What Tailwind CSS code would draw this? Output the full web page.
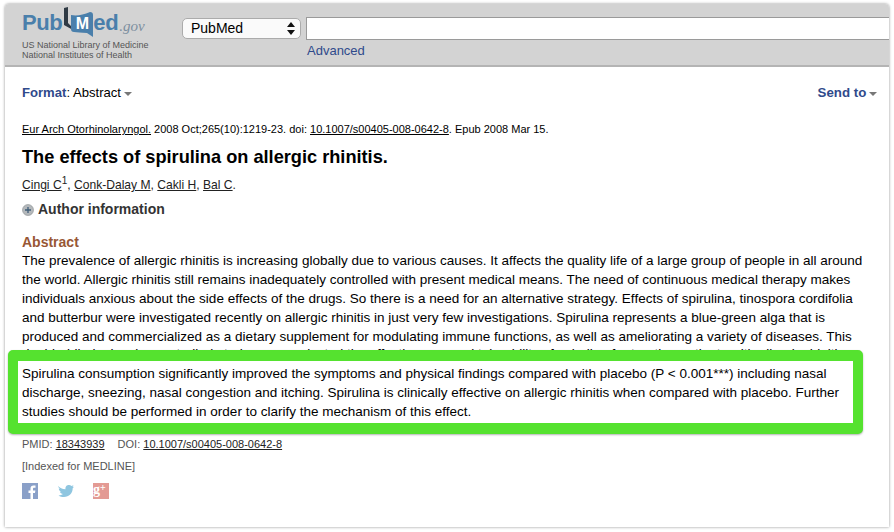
<!DOCTYPE html>
<html lang="en">
<head>
  <meta charset="UTF-8" />
  <title>The effects of spirulina on allergic rhinitis - PubMed</title>
  <script src="https://cdn.jsdelivr.net/npm/@tailwindcss/browser@4"></script>
</head>
<body class="bg-white font-['Liberation_Sans',Arial,sans-serif] text-black overflow-hidden">
  <div class="w-[894px] h-[532px] pt-[4px] pl-[5px] bg-white">
    <div class="w-[884px] h-[523px] rounded-t-[4px] shadow-[0_0_3px_rgba(0,0,0,0.45)] bg-white relative">

      <!-- header -->
      <header class="h-[63px] bg-[#d3d3d3] rounded-t-[4px] border-b-2 border-[#b4b4b4] flex">
        <div class="w-[177px] pl-[17px] pt-[3px]">
          <div class="h-[33px] flex items-start">
            <span class="text-[22px] leading-[22px] font-bold text-[#4a7fab] mt-[5px] tracking-[-0.4px]">Pub</span>
            <svg class="w-[10px] h-[23px] ml-[1px] shrink-0" viewBox="0 0 10 23"><path d="M1 1 L5 0 L5 16 L10 21 L10 23 L1 18 Z" fill="#2f3a44"/></svg>
            <div class="relative w-[22px] h-[26px] -ml-[2px] mt-[5px] shrink-0">
              <svg class="absolute inset-0 w-[22px] h-[26px]" viewBox="0 0 22 26"><path d="M0 3 C6 4 12 3 19 0 C21 0 22 1 22 3 L22 25 L16 21 C10 21 6 20 3 20 C1 20 0 19 0 17 Z" fill="#4a7fab"/></svg>
              <span class="relative block text-center text-[16px] leading-[16px] pt-[4px] font-bold text-white">M</span>
            </div>
            <span class="text-[22px] leading-[22px] font-bold text-[#4a7fab] mt-[5px] tracking-[-0.4px]">ed</span>
            <span class="text-[15px] leading-[15px] italic font-['Liberation_Serif',serif] text-[#7d8fa0] mt-[12px] ml-[1px]">.gov</span>
          </div>
          <div class="text-[9px] leading-[10px] text-[#555]">US National Library of Medicine<br>National Institutes of Health</div>
        </div>
        <div class="flex-1 pt-[14px]">
          <div class="flex">
            <div class="w-[119px] h-[21px] rounded-[5px] border border-[#ababab] bg-[#fafafa] text-[14px] leading-[19px] pl-[8px] flex justify-between shrink-0">
              PubMed
              <svg class="w-[8px] h-[13px] mt-[3px] mr-[5px]" viewBox="0 0 8 13"><path d="M4 0 L8 5 L0 5 Z M0 8 L8 8 L4 13 Z" fill="#111"/></svg>
            </div>
            <div class="flex-1 h-[23px] -mt-[1px] ml-[5px] bg-white border-y border-l border-[#9a9a9a]"></div>
          </div>
          <a class="block ml-[125px] mt-[3px] text-[13px] leading-[16px] text-[#2f4a8b]">Advanced</a>
        </div>
      </header>

      <main class="px-[17px]">
        <div class="flex justify-between pt-[18px] -mr-[5px] text-[13.1px] leading-[16px]">
          <div><b class="text-[#2f4a8b]">Format</b>: Abstract <span class="inline-block align-middle -ml-[1px] border-x-[4px] border-t-[4px] border-x-transparent border-t-[#777]"></span></div>
          <div><b class="text-[#2f4a8b] text-[13.3px]">Send to</b> <span class="inline-block align-middle -ml-[1px] border-x-[4px] border-t-[4px] border-x-transparent border-t-[#777]"></span></div>
        </div>

        <p class="mt-[21px] text-[11px] leading-[14px]"><a class="underline">Eur Arch Otorhinolaryngol.</a> 2008 Oct;265(10):1219-23. doi: <a class="underline">10.1007/s00405-008-0642-8</a>. Epub 2008 Mar 15.</p>
        <h1 class="mt-[10px] text-[18.2px] leading-[22px] font-bold">The effects of spirulina on allergic rhinitis.</h1>
        <p class="mt-[8px] text-[12.1px] leading-[18px] text-[#222]"><a class="underline">Cingi C</a><sup class="text-[10px]">1</sup>, <a class="underline">Conk-Dalay M</a>, <a class="underline">Cakli H</a>, <a class="underline">Bal C</a>.</p>

        <div class="mt-[6px] flex items-center gap-[4px] h-[18px]">
          <svg class="w-[12px] h-[12px] mt-[1px]" viewBox="0 0 12 12"><circle cx="6" cy="6" r="5.5" fill="#b4b8bb" stroke="#8c9194" stroke-width="0.6"/><path d="M6 3 V9 M3 6 H9" stroke="#3f5d78" stroke-width="1.3"/></svg>
          <b class="text-[14px] leading-[18px] text-[#333]">Author information</b>
        </div>

        <h3 class="mt-[16px] text-[14px] leading-[16px] font-bold text-[#985735]">Abstract</h3>
        <p class="h-[99px] mt-[1px] overflow-hidden text-[13.5px] leading-[19px] whitespace-nowrap">The prevalence of allergic rhinitis is increasing globally due to various causes. It affects the quality life of a large group of people in all around<br>the world. Allergic rhinitis still remains inadequately controlled with present medical means. The need of continuous medical therapy makes<br>individuals anxious about the side effects of the drugs. So there is a need for an alternative strategy. Effects of spirulina, tinospora cordifolia<br>and butterbur were investigated recently on allergic rhinitis in just very few investigations. Spirulina represents a blue-green alga that is<br>produced and commercialized as a dietary supplement for modulating immune functions, as well as ameliorating a variety of diseases. This<br><span class="relative -top-[2px]">double-blind, placebo-controlled study was conducted the effectiveness and tolerability of spirulina for treating patients with allergic rhinitis.</span></p>

        <!-- highlight over the abstract -->
        <div class="relative -ml-[14px] w-[855px] h-[84px] border-x-[10px] border-y-[11px] border-[#55e22f] rounded-[5px] bg-white pl-[4px] pt-[3px] shadow-[0_1px_2px_rgba(0,0,0,0.3)] text-[13.5px] leading-[19px] whitespace-nowrap">Spirulina consumption significantly improved the symptoms and physical findings compared with placebo (P &lt; 0.001***) including nasal<br>discharge, sneezing, nasal congestion and itching. Spirulina is clinically effective on allergic rhinitis when compared with placebo. Further<br>studies should be performed in order to clarify the mechanism of this effect.</div>

        <p class="mt-[3px] text-[11px] leading-[14px] text-[#555]">PMID: <a class="underline text-[#222]">18343939</a><span class="ml-[13px]">DOI:</span> <a class="underline text-[#222]">10.1007/s00405-008-0642-8</a></p>
        <p class="mt-[8px] text-[11px] leading-[14px] text-[#555]">[Indexed for MEDLINE]</p>

        <div class="mt-[10px] flex items-center gap-[20px]">
          <svg class="w-[16px] h-[16px]" viewBox="0 0 16 16"><rect width="16" height="16" fill="#8aa0c8"/><path d="M11 16 V10 H13 L13.4 7.5 H11 V6 C11 5.2 11.3 4.8 12.2 4.8 H13.5 V2.6 H11.6 C9.6 2.6 8.5 3.8 8.5 5.7 V7.5 H6.5 V10 H8.5 V16 Z" fill="#fff"/></svg>
          <svg class="w-[16px] h-[14px]" viewBox="0 0 16 14"><path d="M0 2 C2 4 4 5 7.5 5.2 C7 2.5 9 1 11 1 C12 1 12.8 1.4 13.4 2 L15.5 1.2 L14.5 3 L16 2.8 L14.7 4.2 C14.7 9 11 13 6 13 C4 13 2 12.4 0.5 11.4 C2.2 11.5 3.7 11 5 10 C3.5 10 2.3 9 1.8 7.8 L3.3 7.8 C1.7 7.2 0.8 6 0.8 4.5 L2.2 4.9 C0.8 4 0.3 3 0 2 Z" fill="#8fc6e0"/></svg>
          <div class="w-[16px] h-[16px] bg-[#e39a94] text-white text-[14px] leading-[14px] font-['Liberation_Serif',serif] font-bold -ml-[1px] flex">g<span class="text-[10px] leading-[10px]">+</span></div>
        </div>
      </main>
    </div>
  </div>
</body>
</html>
